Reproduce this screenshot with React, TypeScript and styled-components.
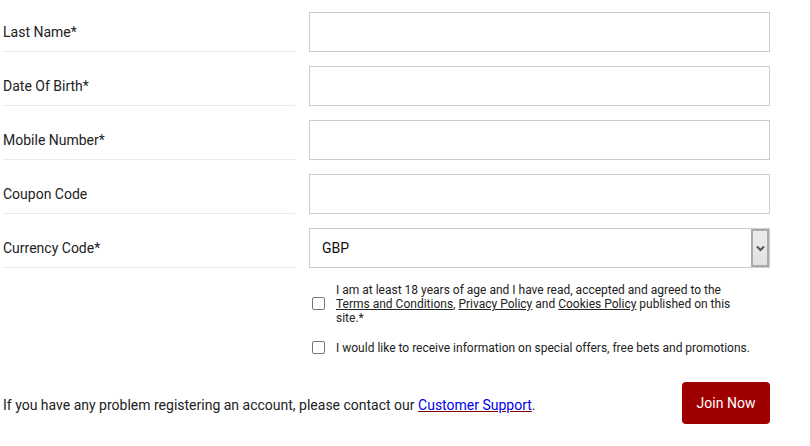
import styled, { createGlobalStyle } from "styled-components";

const GlobalStyle = createGlobalStyle`
    body{
        margin: 0;
        background: #fff;
        font-family: Roboto, "Liberation Sans", Arial, sans-serif;
        color: #222;
    }
`

const Form = styled.form`
    width: 767px;
    padding-left: 3px;
    display: flex;
    flex-direction: column;
    gap: 2px;
`

const FieldRow = styled.div`
    display: grid;
    grid-template-columns: 292px 1fr;
    column-gap: 14px;
    align-items: end;
`

const Label = styled.label`
    box-sizing: border-box;
    height: 52px;
    padding-top: 12px;
    border-bottom: 1px solid #eaeaea;
    display: flex;
    align-items: center;
    font-size: 14px;
    color: #222;
`

const Input = styled.input`
    box-sizing: border-box;
    height: 40px;
    width: 100%;
    border: 1px solid #ccc;
    background: #fff;
    outline: none;
`

const SelectBox = styled.div`
    box-sizing: border-box;
    height: 40px;
    border: 1px solid #ccc;
    display: flex;
    align-items: center;
    justify-content: space-between;
    padding-left: 12px;
    font-size: 14px;
    color: #111;
`

const SelectArrow = styled.span`
    box-sizing: border-box;
    width: 18px;
    height: 38px;
    background: linear-gradient(#ececec, #e2e2e2);
    border: 2px solid #aaa;
    display: flex;
    align-items: center;
    justify-content: center;
`

const Agreements = styled.div`
    margin-left: 309px;
    padding-top: 15px;
    display: flex;
    flex-direction: column;
    gap: 16px;
`

const CheckRow = styled.label`
    display: flex;
    align-items: center;
    gap: 11px;
    padding-left: 3px;
`

const Box = styled.span`
    flex: none;
    box-sizing: border-box;
    width: 13px;
    height: 13px;
    margin-top: -2px;
    border: 1px solid #767676;
    border-radius: 2px;
    background: #fff;
`

const CheckText = styled.span`
    width: 418px;
    font-size: 12px;
    line-height: 14px;
    color: #222;
    a{
        color: #222;
        text-decoration: underline;
    }
`

const Footer = styled.div`
    margin-top: 27px;
    width: 767px;
    padding-left: 3px;
    display: flex;
    align-items: center;
    justify-content: space-between;
`

const Help = styled.p`
    margin: 4px 0 0;
    font-size: 14px;
    color: #222;
    a{
        color: #0000ee;
        text-decoration: underline;
        text-decoration-color: #7a0000;
    }
`

const JoinButton = styled.button`
    width: 88px;
    height: 42px;
    border: none;
    border-radius: 4px;
    background: #9e0000;
    color: #fff;
    font-family: inherit;
    font-size: 14px;
`

const fields = ["Last Name*", "Date Of Birth*", "Mobile Number*", "Coupon Code"];

export default function App(){
    return(
        <>
            <GlobalStyle/>
            <Form>
                {fields.map(f => (
                    <FieldRow key={f}>
                        <Label>{f}</Label>
                        <Input/>
                    </FieldRow>
                ))}
                <FieldRow>
                    <Label>Currency Code*</Label>
                    <SelectBox>
                        GBP
                        <SelectArrow>
                            <svg width="9" height="7" viewBox="0 0 9 7">
                                <path d="M1 1.5 L4.5 5 L8 1.5" stroke="#555" strokeWidth="2" fill="none"/>
                            </svg>
                        </SelectArrow>
                    </SelectBox>
                </FieldRow>
            </Form>
            <Agreements>
                <CheckRow>
                    <Box/>
                    <CheckText>
                        I am at least 18 years of age and I have read, accepted and agreed to the <a>Terms and Conditions</a>, <a>Privacy Policy</a> and <a>Cookies Policy</a> published on this site.*
                    </CheckText>
                </CheckRow>
                <CheckRow>
                    <Box/>
                    <CheckText>I would like to receive information on special offers, free bets and promotions.</CheckText>
                </CheckRow>
            </Agreements>
            <Footer>
                <Help>If you have any problem registering an account, please contact our <a>Customer Support</a>.</Help>
                <JoinButton>Join Now</JoinButton>
            </Footer>
        </>
    )
}
